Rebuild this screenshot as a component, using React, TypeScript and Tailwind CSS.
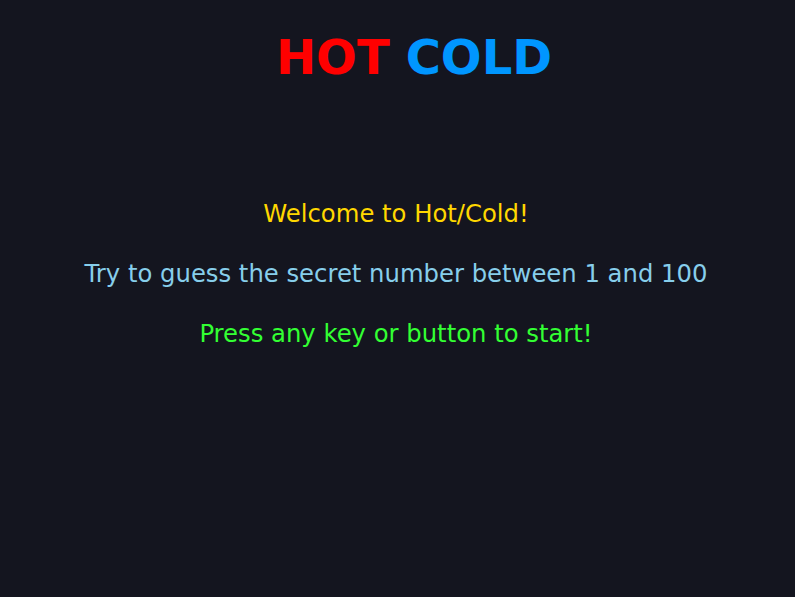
export default function App() {
  return (
    <div className="min-h-screen w-full bg-[#14151f] font-['DejaVu_Sans',sans-serif]">
      <h1 className="pt-[33px] flex justify-center pl-[33px] text-[48px] font-bold leading-none">
        <span className="text-[#ff0000]">HOT</span>
        <span className="ml-[16px] text-[#0096ff]">COLD</span>
      </h1>
      <div className="mt-[103px] flex flex-col items-center pr-[3px] text-[24.3px] leading-[60px]">
        <p className="text-[#ffd700]">Welcome to Hot/Cold!</p>
        <p className="text-[#87ceeb]">Try to guess the secret number between 1 and 100</p>
        <p className="text-[#33ff33]">Press any key or button to start!</p>
      </div>
    </div>
  );
}
